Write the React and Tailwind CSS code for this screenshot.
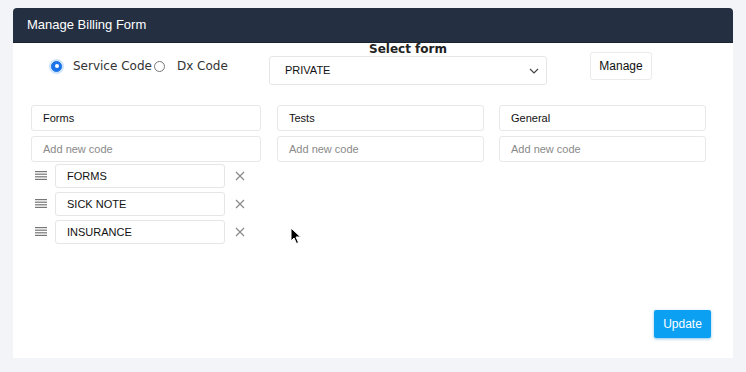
import React from "react";

function Drag() {
  return (
    <svg width="12" height="10" viewBox="0 0 12 10" className="shrink-0">
      <rect x="0" y="0" width="12" height="1.2" fill="#777" />
      <rect x="0" y="2.6" width="12" height="1.2" fill="#777" />
      <rect x="0" y="5.2" width="12" height="1.2" fill="#777" />
      <rect x="0" y="7.8" width="12" height="1.2" fill="#777" />
    </svg>
  );
}

function Close() {
  return (
    <svg width="10" height="10" viewBox="0 0 10 10" className="shrink-0">
      <path d="M1 1 L9 9 M9 1 L1 9" stroke="#8a8a8a" strokeWidth="1.2" fill="none" />
    </svg>
  );
}

function Item({ label }) {
  return (
    <div className="flex items-center h-[24px]">
      <div className="w-[24px] flex justify-start pl-[4px]">
        <Drag />
      </div>
      <div className="w-[170px] h-[24px] border border-[#e6e6e6] rounded-[3px] flex items-center pl-[11px] text-[11px] text-[#111]">
        {label}
      </div>
      <div className="ml-[10px]">
        <Close />
      </div>
    </div>
  );
}

function Column({ title, width, children }) {
  return (
    <div className="flex flex-col" style={{ width }}>
      <div className="h-[26px] border border-[#e8e8e8] rounded-[3px] flex items-center pl-[11px] text-[11px] text-[#111]">
        {title}
      </div>
      <div className="mt-[5px] h-[26px] border border-[#e8e8e8] rounded-[3px] flex items-center pl-[11px] text-[11px] text-[#8a8a8a]">
        Add new code
      </div>
      {children}
    </div>
  );
}

export default function App() {
  return (
    <div className="w-[746px] h-[372px] bg-[#f3f4f8] pt-[8px] pl-[13px] relative" style={{ fontFamily: "'Liberation Sans', Arial, sans-serif" }}>
      <div className="w-[720px] h-[350px] bg-white rounded-t-[4px] flex flex-col">
        <div className="h-[35px] bg-[#243042] rounded-t-[4px] flex items-center pl-[14px] text-white text-[13px] border-b border-[#1a2230]">
          Manage Billing Form
        </div>
        <div className="flex items-start h-[44px]">
          <div className="w-[256px] flex items-center pl-[38px] pt-[14px]" style={{ fontFamily: "'DejaVu Sans', Verdana, sans-serif" }}>
            <span className="w-[11px] h-[11px] rounded-full bg-[#1a73e8] border border-[#1a73e8] flex items-center justify-center shadow-[0_0_0_2px_#cfe3fb]">
              <span className="w-[4px] h-[4px] rounded-full bg-white"></span>
            </span>
            <span className="ml-[11px] text-[12px] text-[#333]">Service Code</span>
            <span className="ml-[2px] w-[11px] h-[11px] rounded-full border border-[#777] bg-white"></span>
            <span className="ml-[12px] text-[12px] text-[#333]">Dx Code</span>
          </div>
          <div className="flex flex-col items-center w-[278px]">
            <div className="text-[12px] font-bold text-[#222] leading-[13px] mt-[0px]" style={{ fontFamily: "'DejaVu Sans', Verdana, sans-serif" }}>Select form</div>
            <div className="w-[278px] h-[29px] border border-[#e6e6e6] rounded-[3px] flex items-center justify-between pl-[15px] pr-[7px] text-[11px] text-[#111]">
              <span>PRIVATE</span>
              <svg width="10" height="6" viewBox="0 0 10 6"><path d="M1 1 L5 5 L9 1" stroke="#444" strokeWidth="1.2" fill="none" /></svg>
            </div>
          </div>
          <div className="ml-[43px] mt-[9px] w-[62px] h-[28px] border border-[#ebebeb] rounded-[3px] flex items-center justify-center text-[12px] text-[#111]">
            Manage
          </div>
        </div>
        <div className="flex pl-[18px] mt-[18px] gap-[16px]">
          <Column title="Forms" width={230}>
            <div className="mt-[2px] flex flex-col gap-[4px]">
              <Item label="FORMS" />
              <Item label="SICK NOTE" />
              <Item label="INSURANCE" />
            </div>
          </Column>
          <Column title="Tests" width={207} />
          <div className="-ml-[1px]">
            <Column title="General" width={207} />
          </div>
        </div>
        <div className="flex-1"></div>
        <div className="flex justify-end pr-[22px] pb-[20px]">
          <div className="w-[57px] h-[28px] bg-[#0ba0f2] rounded-[2px] text-white text-[12px] flex items-center justify-center shadow-[0_1px_3px_rgba(0,120,200,0.45)]">
            Update
          </div>
        </div>
      </div>
      <svg className="absolute left-[290px] top-[227px]" width="12" height="18" viewBox="0 0 12 18">
        <path d="M1 1 L1 14 L4 11 L6.5 16.5 L8.5 15.5 L6 10 L10.5 10 Z" fill="#000" stroke="#fff" strokeWidth="1" />
      </svg>
    </div>
  );
}
